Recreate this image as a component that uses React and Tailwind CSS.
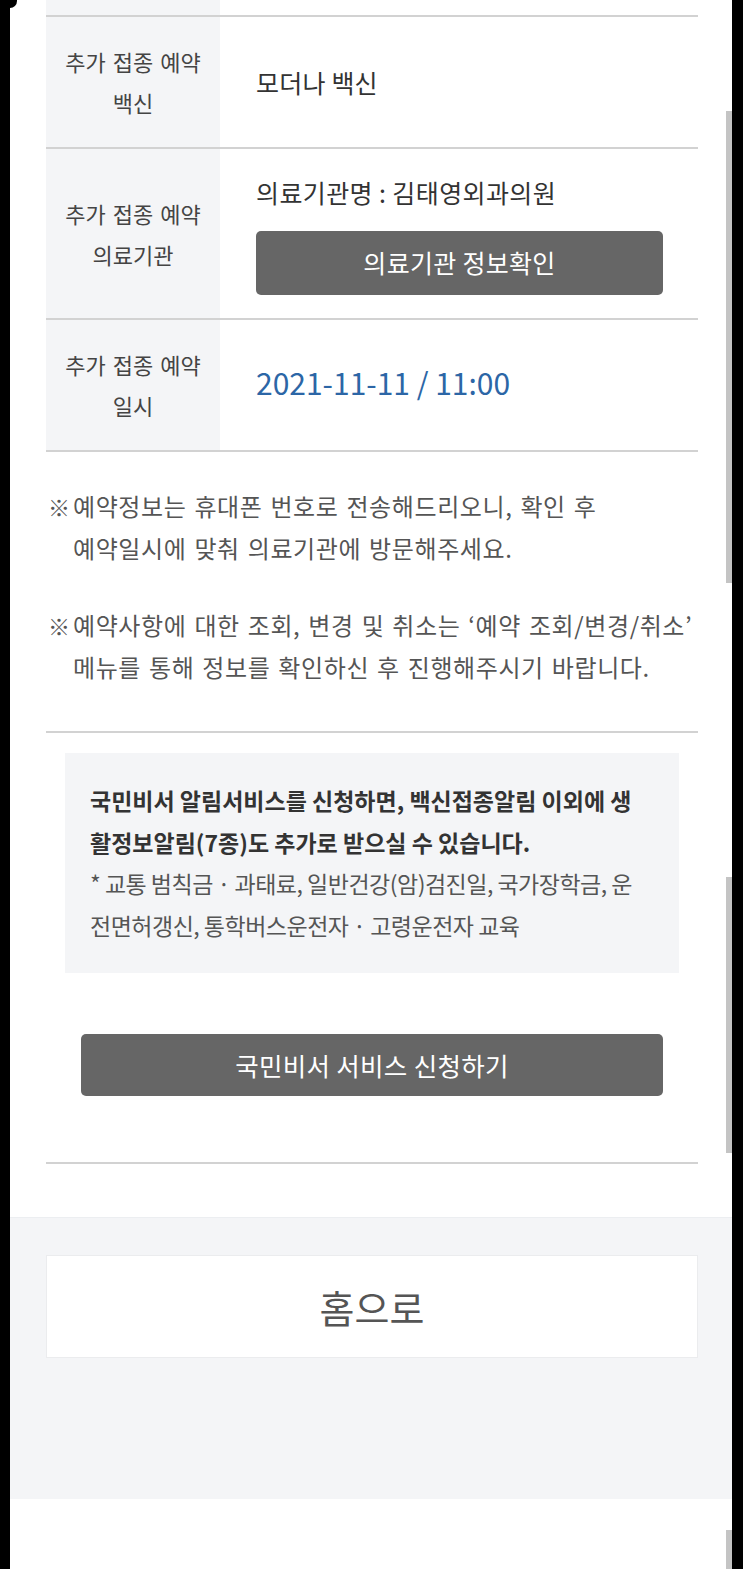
import React from "react";

const F = "font-['Noto_Sans_CJK_KR','Noto_Sans',sans-serif]";

function Row({ label, children, className = "" }) {
  return (
    <div className={`flex border-b-2 border-[#d2d2d2] ${className}`}>
      <div className="w-[174px] shrink-0 bg-[#f4f5f7] flex items-center justify-center text-center text-[22px] leading-[41px] text-[#444] [word-spacing:2px] py-[24px]">
        <div>{label}</div>
      </div>
      <div className="flex-1 flex flex-col justify-center pl-[36px] pr-[35px] py-[23px]">
        {children}
      </div>
    </div>
  );
}

export default function App() {
  return (
    <div className={`flex bg-black h-[1569px] w-[743px] overflow-hidden ${F}`}>
      <div className="relative ml-[10px] w-[722px] bg-white flex flex-col">
        {/* table */}
        <div className="ml-[36px] mr-[34px]">
          <div className="flex h-[17px] border-b-2 border-[#d2d2d2]">
            <div className="w-[174px] bg-[#f4f5f7]" />
          </div>
          <Row label={<>추가 접종 예약<br />백신</>}>
            <div className="text-[25px] leading-[40px] text-[#333] tracking-[0.2px]">모더나 백신</div>
          </Row>
          <Row label={<>추가 접종 예약<br />의료기관</>}>
            <div className="text-[25px] leading-[40px] text-[#333] tracking-[0.4px] whitespace-nowrap">의료기관명 : 김태영외과의원</div>
            <button className="mt-[19px] h-[64px] w-[407px] rounded-[5px] bg-[#666666] text-white text-[25px] tracking-[0.3px]">
              의료기관 정보확인
            </button>
          </Row>
          <Row label={<>추가 접종 예약<br />일시</>}>
            <div className="text-[30px] leading-[40px] text-[#2c66a6] -mt-[6px]">2021-11-11 / 11:00</div>
          </Row>
        </div>

        {/* notes */}
        <div className="ml-[36px] mr-[34px] mt-[33px] text-[24px] leading-[42px] text-[#555] tracking-[0.6px] [word-spacing:2px]">
          <div className="flex">
            <span className="w-[27px] shrink-0 pl-[2px] tracking-normal text-[22px]">※</span>
            <div className="whitespace-nowrap">
              예약정보는 휴대폰 번호로 전송해드리오니, 확인 후<br />
              예약일시에 맞춰 의료기관에 방문해주세요.
            </div>
          </div>
          <div className="flex mt-[35px]">
            <span className="w-[27px] shrink-0 pl-[2px] tracking-normal text-[22px]">※</span>
            <div className="whitespace-nowrap">
              예약사항에 대한 조회, 변경 및 취소는 ‘예약 조회/변경/취소’<br />
              메뉴를 통해 정보를 확인하신 후 진행해주시기 바랍니다.
            </div>
          </div>
        </div>

        <div className="ml-[36px] mr-[34px] mt-[43px] border-t-2 border-[#d2d2d2]" />

        {/* info box */}
        <div className="ml-[55px] mr-[53px] mt-[20px] bg-[#f4f5f7] pl-[25px] pr-[10px] pt-[27px] pb-[27px] text-[23px] leading-[41.5px] whitespace-nowrap">
          <div className="font-bold text-[#333]">국민비서 알림서비스를 신청하면, 백신접종알림 이외에 생</div>
          <div className="font-bold text-[#333]">활정보알림(7종)도 추가로 받으실 수 있습니다.</div>
          <div className="text-[#555] tracking-[-0.5px]">* 교통 범칙금 · 과태료, 일반건강(암)검진일, 국가장학금, 운</div>
          <div className="text-[#555] tracking-[-0.5px]">전면허갱신, 통학버스운전자 · 고령운전자 교육</div>
        </div>

        <div className="ml-[71px] mr-[69px] mt-[61px]">
          <button className="w-full h-[62px] rounded-[5px] bg-[#666666] text-white text-[25.5px] tracking-[0.3px]">
            국민비서 서비스 신청하기
          </button>
        </div>

        <div className="ml-[36px] mr-[34px] mt-[66px] border-t-2 border-[#d2d2d2]" />

        {/* footer */}
        <div className="mt-[53px] bg-[#f4f5f7] border-t border-[#eceef1] pt-[37px] pb-[141px] pl-[36px] pr-[34px]">
          <div className="h-[103px] bg-white border border-[#ebecee] flex items-center justify-center text-[38px] text-[#555]">
            홈으로
          </div>
        </div>

        {/* scrollbar artifacts */}
        <div className="absolute right-0 top-[111px] h-[472px] w-[6px] bg-[#c4c4c4]" />
        <div className="absolute right-0 top-[877px] h-[276px] w-[6px] bg-[#c4c4c4]" />
        <div className="absolute right-0 top-[1530px] h-[39px] w-[6px] bg-[#c4c4c4]" />
        <div className="absolute left-0 top-[-6px] h-[14px] w-[7px] rounded-br-full bg-black" />
      </div>
    </div>
  );
}
